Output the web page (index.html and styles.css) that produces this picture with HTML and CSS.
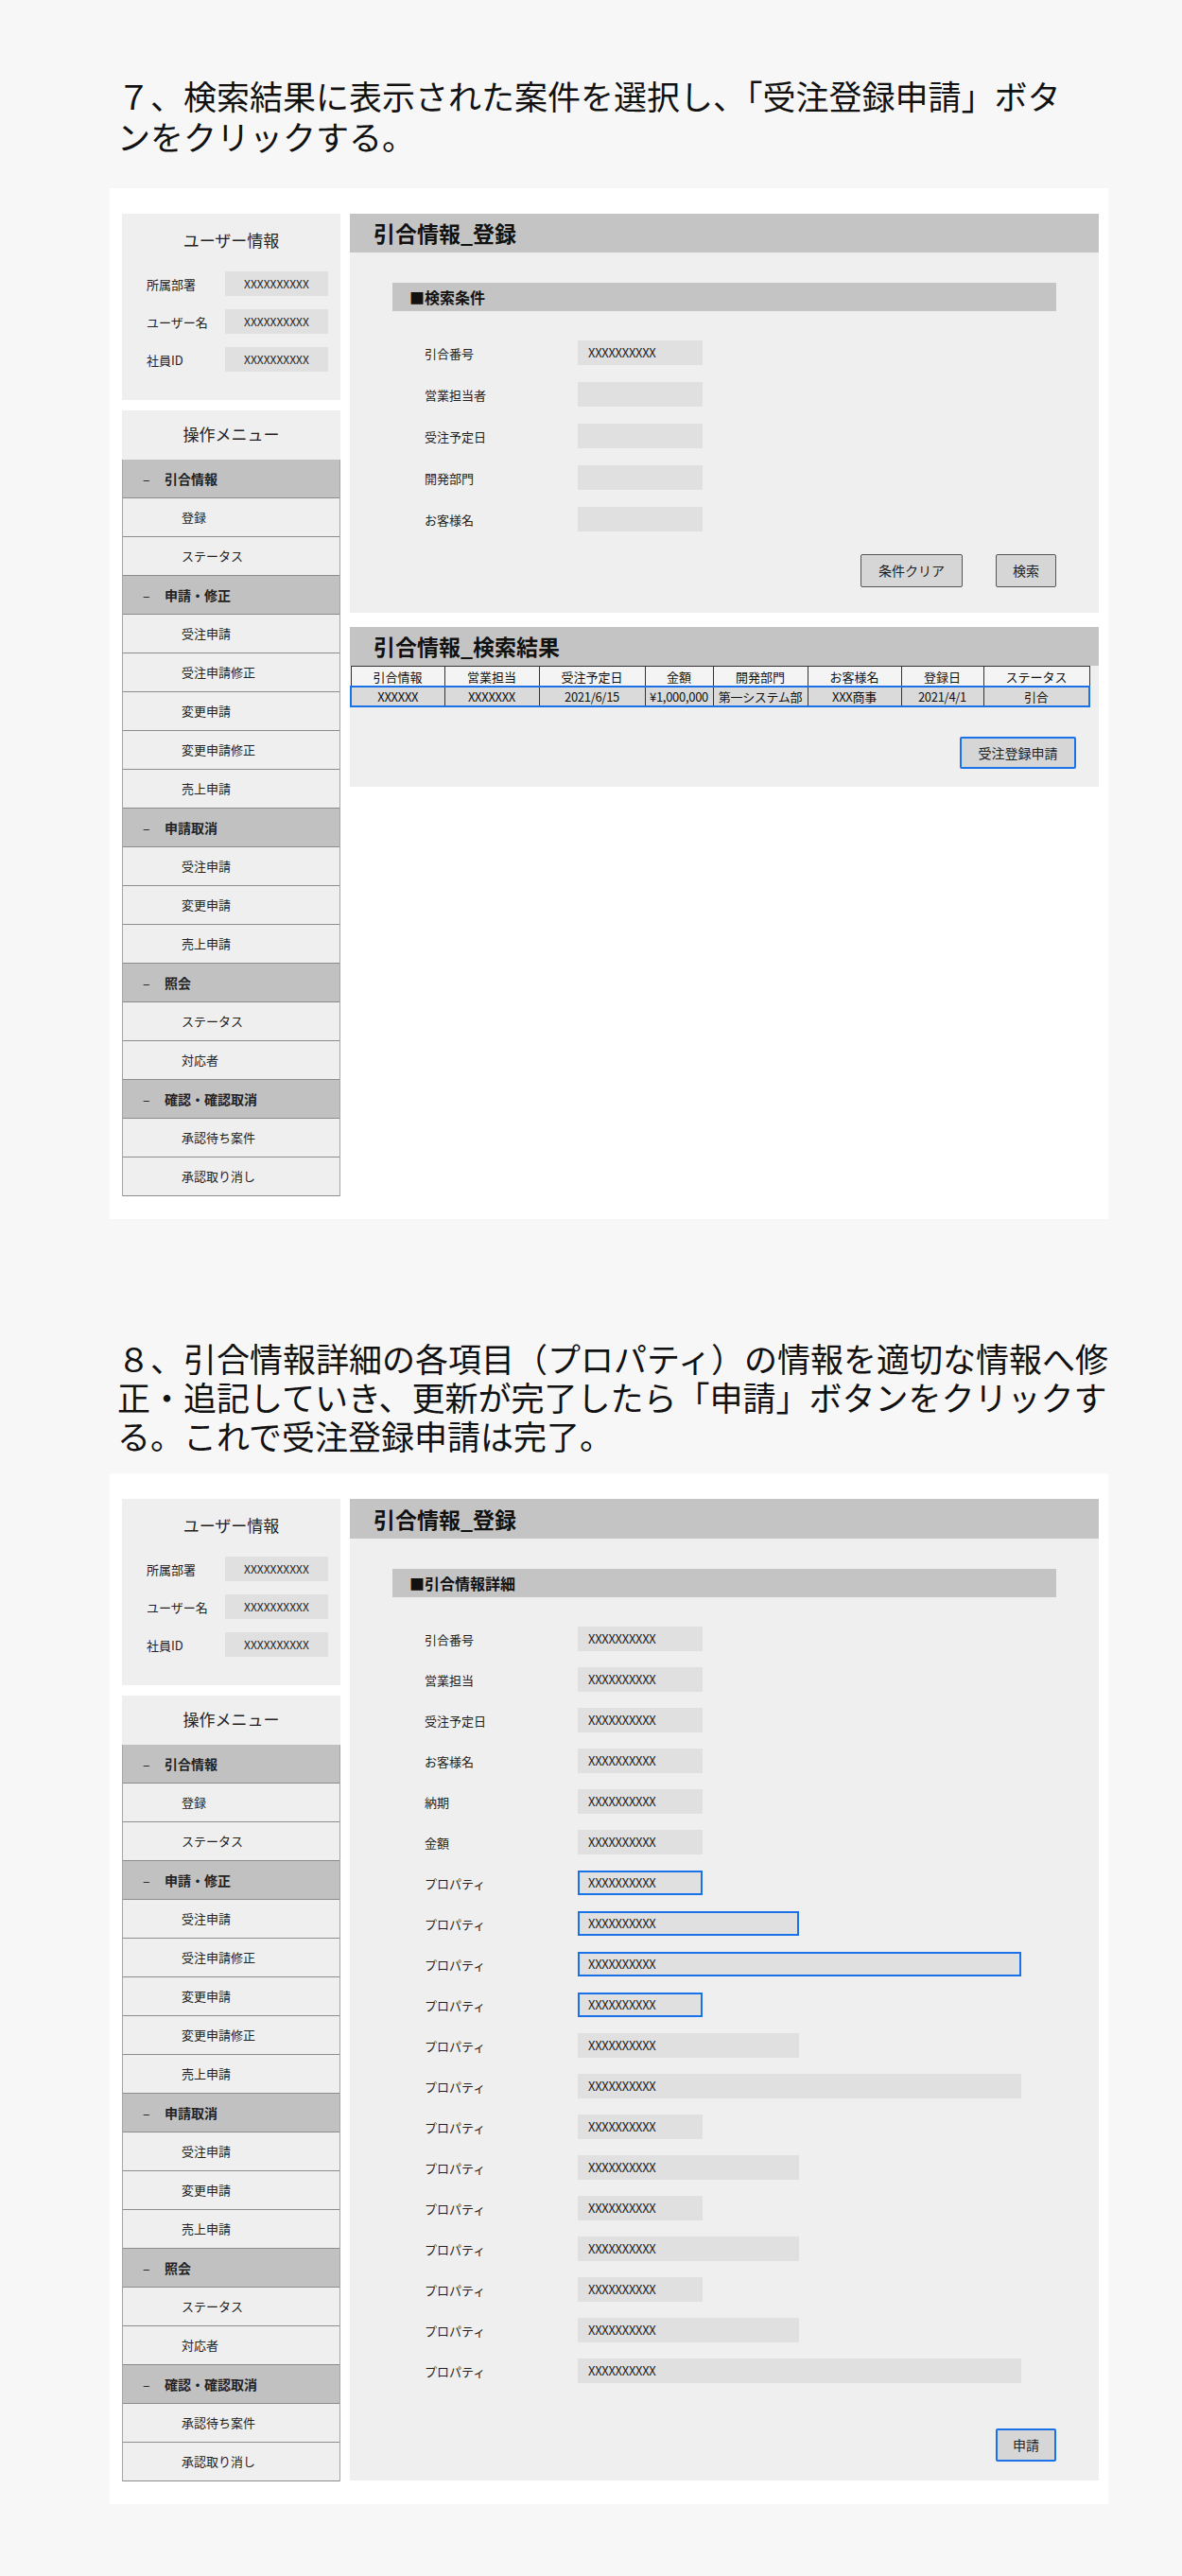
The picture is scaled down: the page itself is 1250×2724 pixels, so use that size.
FILE: index.html
```html
<!DOCTYPE html>
<html lang="ja">
<head>
    <meta charset="utf-8">
    <title>受注登録申請 手順</title>
    <link rel="stylesheet" href="styles.css">
</head>
<body>
<div class="page">

<p class="step step7">７、検索結果に表示された案件を選択し、「受注登録申請」ボタ<br>ンをクリックする。</p>

<div class="screen">
    <div class="sidebar">
        <div class="user_info">
            <div class="box_title">ユーザー情報</div>
            <div class="info_row"><span class="info_label">所属部署</span><span class="info_value">XXXXXXXXXX</span></div>
            <div class="info_row"><span class="info_label">ユーザー名</span><span class="info_value">XXXXXXXXXX</span></div>
            <div class="info_row"><span class="info_label">社員ID</span><span class="info_value">XXXXXXXXXX</span></div>
        </div>
        <div class="menu">
            <div class="menu_title">操作メニュー</div>
            <div class="menu_list">
                <div class="menu_group"><span class="dash">–</span>引合情報</div>
                <div class="menu_item">登録</div>
                <div class="menu_item">ステータス</div>
                <div class="menu_group"><span class="dash">–</span>申請・修正</div>
                <div class="menu_item">受注申請</div>
                <div class="menu_item">受注申請修正</div>
                <div class="menu_item">変更申請</div>
                <div class="menu_item">変更申請修正</div>
                <div class="menu_item">売上申請</div>
                <div class="menu_group"><span class="dash">–</span>申請取消</div>
                <div class="menu_item">受注申請</div>
                <div class="menu_item">変更申請</div>
                <div class="menu_item">売上申請</div>
                <div class="menu_group"><span class="dash">–</span>照会</div>
                <div class="menu_item">ステータス</div>
                <div class="menu_item">対応者</div>
                <div class="menu_group"><span class="dash">–</span>確認・確認取消</div>
                <div class="menu_item">承認待ち案件</div>
                <div class="menu_item">承認取り消し</div>
            </div>
        </div>
    </div>

    <div class="content">
        <div class="panel">
            <div class="panel_title">引合情報_登録</div>
            <div class="panel_body">
                <div class="section_bar">■検索条件</div>
                <div class="form search_form">
                    <div class="form_row"><span class="form_label">引合番号</span><span class="field short">XXXXXXXXXX</span></div>
                    <div class="form_row"><span class="form_label">営業担当者</span><span class="field short"></span></div>
                    <div class="form_row"><span class="form_label">受注予定日</span><span class="field short"></span></div>
                    <div class="form_row"><span class="form_label">開発部門</span><span class="field short"></span></div>
                    <div class="form_row"><span class="form_label">お客様名</span><span class="field short"></span></div>
                </div>
                <div class="buttons search_buttons">
                    <span class="btn btn_clear">条件クリア</span>
                    <span class="btn btn_search">検索</span>
                </div>
            </div>
        </div>

        <div class="panel result_panel">
            <div class="panel_title">引合情報_検索結果</div>
            <table class="result_table" cellspacing="0" cellpadding="0">
                <tr>
                    <th class="c1">引合情報</th>
                    <th class="c2">営業担当</th>
                    <th class="c3">受注予定日</th>
                    <th class="c4">金額</th>
                    <th class="c5">開発部門</th>
                    <th class="c6">お客様名</th>
                    <th class="c7">登録日</th>
                    <th class="c8">ステータス</th>
                </tr>
                <tr class="selected">
                    <td>XXXXXX</td>
                    <td>XXXXXXX</td>
                    <td>2021/6/15</td>
                    <td>¥1,000,000</td>
                    <td>第一システム部</td>
                    <td>XXX商事</td>
                    <td>2021/4/1</td>
                    <td>引合</td>
                </tr>
            </table>
            <div class="buttons result_buttons">
                <span class="btn btn_active btn_order">受注登録申請</span>
            </div>
        </div>
    </div>
</div>

<p class="step step8">８、引合情報詳細の各項目（プロパティ）の情報を適切な情報へ修<br>正・追記していき、更新が完了したら「申請」ボタンをクリックす<br>る。これで受注登録申請は完了。</p>

<div class="screen">
    <div class="sidebar">
        <div class="user_info">
            <div class="box_title">ユーザー情報</div>
            <div class="info_row"><span class="info_label">所属部署</span><span class="info_value">XXXXXXXXXX</span></div>
            <div class="info_row"><span class="info_label">ユーザー名</span><span class="info_value">XXXXXXXXXX</span></div>
            <div class="info_row"><span class="info_label">社員ID</span><span class="info_value">XXXXXXXXXX</span></div>
        </div>
        <div class="menu">
            <div class="menu_title">操作メニュー</div>
            <div class="menu_list">
                <div class="menu_group"><span class="dash">–</span>引合情報</div>
                <div class="menu_item">登録</div>
                <div class="menu_item">ステータス</div>
                <div class="menu_group"><span class="dash">–</span>申請・修正</div>
                <div class="menu_item">受注申請</div>
                <div class="menu_item">受注申請修正</div>
                <div class="menu_item">変更申請</div>
                <div class="menu_item">変更申請修正</div>
                <div class="menu_item">売上申請</div>
                <div class="menu_group"><span class="dash">–</span>申請取消</div>
                <div class="menu_item">受注申請</div>
                <div class="menu_item">変更申請</div>
                <div class="menu_item">売上申請</div>
                <div class="menu_group"><span class="dash">–</span>照会</div>
                <div class="menu_item">ステータス</div>
                <div class="menu_item">対応者</div>
                <div class="menu_group"><span class="dash">–</span>確認・確認取消</div>
                <div class="menu_item">承認待ち案件</div>
                <div class="menu_item">承認取り消し</div>
            </div>
        </div>
    </div>

    <div class="content">
        <div class="panel detail_panel">
            <div class="panel_title">引合情報_登録</div>
            <div class="panel_body">
                <div class="section_bar">■引合情報詳細</div>
                <div class="form detail_form">
                    <div class="form_row"><span class="form_label">引合番号</span><span class="field short">XXXXXXXXXX</span></div>
                    <div class="form_row"><span class="form_label">営業担当</span><span class="field short">XXXXXXXXXX</span></div>
                    <div class="form_row"><span class="form_label">受注予定日</span><span class="field short">XXXXXXXXXX</span></div>
                    <div class="form_row"><span class="form_label">お客様名</span><span class="field short">XXXXXXXXXX</span></div>
                    <div class="form_row"><span class="form_label">納期</span><span class="field short">XXXXXXXXXX</span></div>
                    <div class="form_row"><span class="form_label">金額</span><span class="field short">XXXXXXXXXX</span></div>
                    <div class="form_row"><span class="form_label">プロパティ</span><span class="field short edited">XXXXXXXXXX</span></div>
                    <div class="form_row"><span class="form_label">プロパティ</span><span class="field medium edited">XXXXXXXXXX</span></div>
                    <div class="form_row"><span class="form_label">プロパティ</span><span class="field long edited">XXXXXXXXXX</span></div>
                    <div class="form_row"><span class="form_label">プロパティ</span><span class="field short edited">XXXXXXXXXX</span></div>
                    <div class="form_row"><span class="form_label">プロパティ</span><span class="field medium">XXXXXXXXXX</span></div>
                    <div class="form_row"><span class="form_label">プロパティ</span><span class="field long">XXXXXXXXXX</span></div>
                    <div class="form_row"><span class="form_label">プロパティ</span><span class="field short">XXXXXXXXXX</span></div>
                    <div class="form_row"><span class="form_label">プロパティ</span><span class="field medium">XXXXXXXXXX</span></div>
                    <div class="form_row"><span class="form_label">プロパティ</span><span class="field short">XXXXXXXXXX</span></div>
                    <div class="form_row"><span class="form_label">プロパティ</span><span class="field medium">XXXXXXXXXX</span></div>
                    <div class="form_row"><span class="form_label">プロパティ</span><span class="field short">XXXXXXXXXX</span></div>
                    <div class="form_row"><span class="form_label">プロパティ</span><span class="field medium">XXXXXXXXXX</span></div>
                    <div class="form_row"><span class="form_label">プロパティ</span><span class="field long">XXXXXXXXXX</span></div>
                </div>
                <div class="buttons detail_buttons">
                    <span class="btn btn_active btn_apply">申請</span>
                </div>
            </div>
        </div>
    </div>
</div>

</div>
</body>
</html>
```

FILE: styles.css
```css
body {
    margin: 0;
    background-color: #f7f7f7;
    color: #111;
    font-family: "Noto Sans CJK JP", "Noto Sans", sans-serif;
}

.page {
    width: 1056px;
    margin-left: 116px;
    padding-bottom: 76px;
}

.step {
    margin: 0;
    padding-left: 8px;
    font-size: 35px;
    line-height: 43px;
    white-space: nowrap;
}

.step7 {
    padding-top: 79px;
    margin-bottom: 34px;
}

.step8 {
    line-height: 41px;
    margin-top: 126px;
    margin-bottom: 20px;
}

.screen {
    display: flex;
    align-items: flex-start;
    gap: 10px;
    background-color: #fff;
    padding: 27px 10px 24px 13px;
}

/* sidebar */
.sidebar {
    width: 231px;
    display: flex;
    flex-direction: column;
    gap: 11px;
}

.user_info {
    background-color: #efefef;
    padding: 16px 0 30px 0;
}

.box_title {
    text-align: center;
    font-size: 17px;
    line-height: 24px;
    color: #222;
}

.user_info .box_title {
    margin-bottom: 21px;
}

.info_row {
    display: flex;
    align-items: center;
    height: 26px;
    margin-top: 14px;
}

.user_info .box_title + .info_row {
    margin-top: 0;
}

.info_label {
    width: 83px;
    padding-left: 26px;
    font-size: 13px;
    color: #222;
}

.info_value {
    width: 109px;
    height: 26px;
    line-height: 26px;
    background-color: #e0e0e0;
    text-align: center;
    font-size: 12px;
    color: #222;
}

.menu {
    background-color: #efefef;
}

.menu_title {
    height: 52px;
    line-height: 50px;
    text-align: center;
    font-size: 17px;
    color: #222;
}

.menu_list {
    border-left: 1px solid #a6a6a6;
    border-right: 1px solid #a6a6a6;
}

.menu_group, .menu_item {
    height: 40px;
    line-height: 40px;
    border-bottom: 1px solid #8c8c8c;
    font-size: 13px;
    color: #222;
}

.menu_group {
    background-color: #c1c1c1;
    font-weight: bold;
    font-size: 14px;
    padding-left: 21px;
}

.menu_group .dash {
    display: inline-block;
    width: 23px;
    font-weight: normal;
}

.menu_item {
    padding-left: 62px;
}

/* main area */
.content {
    width: 792px;
    display: flex;
    flex-direction: column;
    gap: 15px;
}

.panel {
    background-color: #efefef;
}

.panel_title {
    height: 41px;
    line-height: 41px;
    background-color: #c4c4c4;
    padding-left: 25px;
    font-size: 23px;
    font-weight: bold;
}

.detail_panel .panel_title {
    height: 42px;
    line-height: 42px;
}

.panel_body {
    padding: 32px 45px 27px 45px;
}

.detail_panel .panel_body {
    padding-bottom: 20px;
}

.section_bar {
    height: 30px;
    line-height: 30px;
    background-color: #c4c4c4;
    padding-left: 18px;
    font-size: 16px;
    font-weight: bold;
}

.form {
    margin-top: 31px;
    padding-left: 34px;
    display: flex;
    flex-direction: column;
    gap: 18px;
}

.detail_form {
    gap: 17px;
}

.form_row {
    display: flex;
    align-items: center;
    height: 26px;
}

.form_label {
    width: 162px;
    font-size: 13px;
    color: #222;
}

.field {
    box-sizing: border-box;
    height: 26px;
    line-height: 26px;
    padding-left: 11px;
    background-color: #e0e0e0;
    font-size: 13px;
    letter-spacing: -0.3px;
    color: #222;
}

.short {
    width: 132px;
}

.medium {
    width: 234px;
}

.long {
    width: 469px;
}

.field.edited {
    border: 2px solid #1a72e8;
    line-height: 22px;
    padding-left: 9px;
}

.buttons {
    display: flex;
    justify-content: flex-end;
    gap: 35px;
}

.search_buttons {
    margin-top: 24px;
}

.detail_buttons {
    margin-top: 48px;
}

.btn {
    box-sizing: border-box;
    height: 35px;
    line-height: 33px;
    text-align: center;
    background-color: #d6d6d6;
    border: 1px solid #555;
    border-radius: 2px;
    font-size: 14px;
    color: #222;
}

.btn_active {
    border: 2px solid #1a72e8;
    line-height: 31px;
}

.btn_clear {
    width: 108px;
}

.btn_search, .btn_apply {
    width: 64px;
}

.btn_order {
    width: 123px;
    height: 34px;
    line-height: 30px;
}

.result_buttons {
    margin-top: 31px;
    padding-right: 24px;
    padding-bottom: 19px;
}

/* result table */
.result_table {
    width: 773px;
    border-collapse: collapse;
    table-layout: fixed;
    font-size: 13px;
}

.result_table th, .result_table td {
    border: 1px solid #333;
    text-align: center;
    font-weight: normal;
    padding: 0;
    white-space: nowrap;
    overflow: hidden;
}

.result_table th {
    height: 20px;
    background-color: #f4f4f4;
}

.result_table td {
    height: 19px;
    background-color: #dadada;
    letter-spacing: -0.3px;
}

.result_table tr.selected td {
    border-top: 2px solid #1a72e8;
    border-bottom: 2px solid #1a72e8;
}

.result_table tr.selected td:first-child {
    border-left: 2px solid #1a72e8;
}

.result_table tr.selected td:last-child {
    border-right: 2px solid #1a72e8;
}

.c1 { width: 98px; }
.c2 { width: 99px; }
.c3 { width: 111px; }
.c4 { width: 71px; }
.c5 { width: 99px; }
.c6 { width: 98px; }
.c7 { width: 86px; }
.c8 { width: 111px; }
```
